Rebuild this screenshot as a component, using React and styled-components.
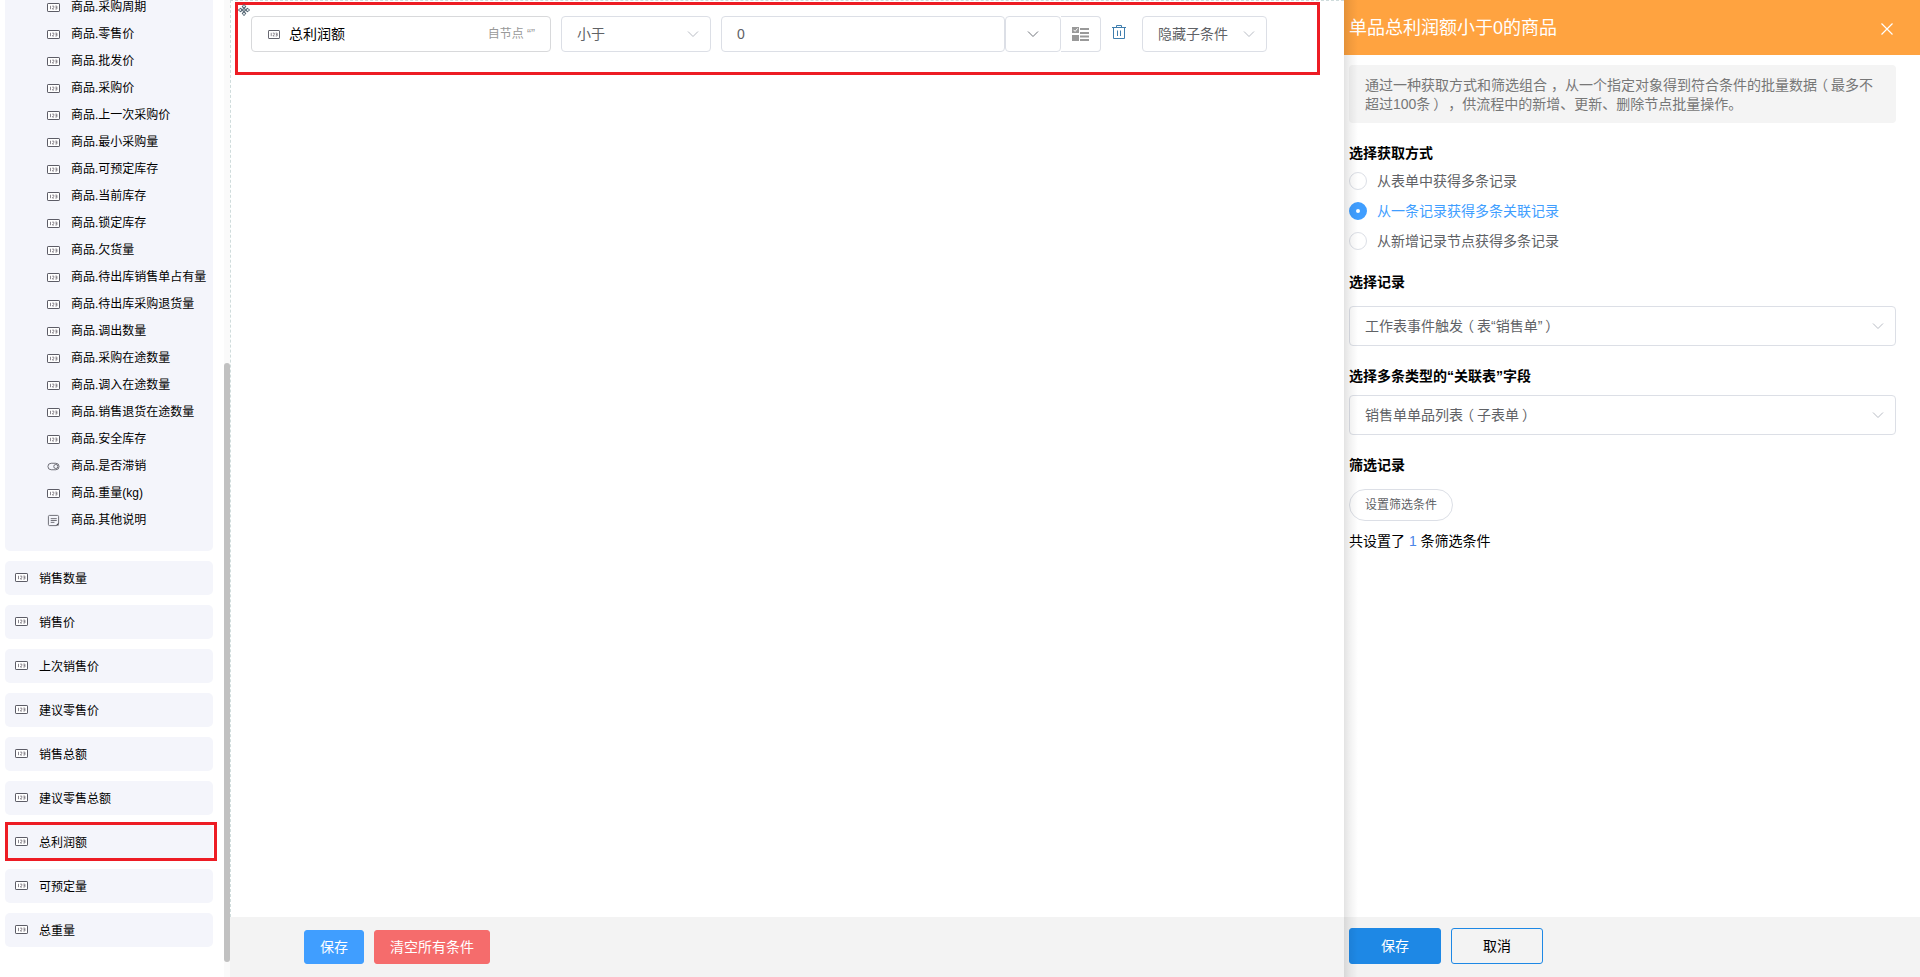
import React from "react";
import styled, { createGlobalStyle, css } from "styled-components";

const GlobalStyle = createGlobalStyle`
  *, *::before, *::after { box-sizing: border-box; }
  body {
    margin: 0;
    background: #fff;
    color: #000;
    font-family: "Liberation Sans", "Noto Sans CJK SC", sans-serif;
    font-size: 14px;
    overflow: hidden;
    text-spacing-trim: space-all;
  }
  button { font-family: inherit; }
`;

const Page = styled.div`
  display: flex;
  width: 1920px;
  height: 977px;
  overflow: hidden;
`;

/* ---------- field list ---------- */

const Sidebar = styled.aside`
  display: flex;
  width: 230px;
  height: 977px;
  flex: none;
`;

const FieldList = styled.div`
  width: 224px;
  padding-left: 5px;
`;

const FieldGroup = styled.ul`
  list-style: none;
  margin: 0;
  width: 208px;
  height: 551px;
  padding: 0 0 0 42px;
  background: #f4f5fb;
  border-radius: 0 0 5px 5px;
  overflow: hidden;

  li:first-child { margin-top: -6px; }
`;

const GroupItem = styled.li`
  display: flex;
  align-items: center;
  gap: 11px;
  height: 27px;
  font-size: 12px;
  line-height: 27px;
  white-space: nowrap;

  svg { flex: none; }
`;

const FieldCard = styled.div`
  position: relative;
  display: flex;
  align-items: center;
  gap: 11px;
  width: 208px;
  height: 34px;
  margin-top: 10px;
  padding-left: 10px;
  background: #f4f5fb;
  border-radius: 5px;
  font-size: 12px;
  line-height: 34px;

  svg { flex: none; margin-bottom: 1px; }
  span { margin-top: 2px; }

  ${(p) =>
    p.$marked &&
    css`
      &::after {
        content: "";
        position: absolute;
        top: -3px;
        left: 0;
        width: 212px;
        height: 39px;
        border: 3px solid #ed1c24;
      }
    `}
`;

const ScrollTrack = styled.div`
  width: 6px;
  height: 100%;
  padding-top: 363px;
  background: #fafafa;
`;

const ScrollThumb = styled.div`
  height: 599px;
  background: #c1c1c1;
  border-radius: 3px;
`;

/* ---------- condition canvas ---------- */

const Main = styled.main`
  display: flex;
  flex-direction: column;
  width: 1114px;
  height: 977px;
  flex: none;
`;

const Canvas = styled.section`
  position: relative;
  flex: 1;
  padding: 1px 0 0 4px;
  border-top: 1px dashed #cfdcdc;
  border-left: 1px dashed #cfdcdc;
`;

const ConditionRow = styled.div`
  display: flex;
  width: 1085px;
  height: 73px;
  padding: 11px 0 0 13px;
  border: 3px solid #ed1c24;
`;

const DragHandle = styled.svg`
  position: absolute;
  left: 7px;
  top: 3px;
`;

const ControlBox = styled.div`
  display: flex;
  align-items: center;
  width: ${(p) => p.$w}px;
  height: ${(p) => p.$h || 36}px;
  flex: none;
  margin-right: ${(p) => p.$gap || 0}px;
  padding: 0 11px 0 15px;
  border: 1px solid #dcdfe6;
  border-radius: 4px;
  background: #fff;
  color: #606266;
  line-height: 34px;
  white-space: nowrap;
`;

const FieldBox = styled(ControlBox)`
  padding-right: 15px;
  padding-left: 16px;
  border-color: #d8d9db;
  color: #000;
  gap: 9px;
`;

const IconBox = styled(ControlBox)`
  justify-content: center;
  padding: 0;
  ${(p) => p.$joined && "border-left: 0; border-radius: 0 4px 4px 0;"}
`;

const NodeHint = styled.span`
  margin-left: auto;
  color: #999;
  font-size: 12px;
`;

const ChevronIcon = styled.svg`
  margin-left: ${(p) => (p.$center ? 0 : "auto")};
  flex: none;
  fill: none;
  stroke: ${(p) => p.$color || "#b8bcc4"};
`;

const TrashButton = styled.span`
  display: flex;
  width: 41px;
  padding: 9px 0 0 11px;
`;

const FooterBar = styled.footer`
  display: flex;
  height: 60px;
  flex: none;
  background: #f3f3f3;
  padding: ${(p) => p.$pad};
  gap: 10px;
`;

const Button = styled.button`
  width: ${(p) => p.$w}px;
  height: ${(p) => p.$h || 34}px;
  padding: 0;
  border: 1px solid ${(p) => p.$border || p.$bg};
  border-radius: ${(p) => p.$radius || 3}px;
  background: ${(p) => p.$bg};
  color: ${(p) => p.$color || "#fff"};
  font-size: ${(p) => p.$size || 14}px;
  line-height: 1;
`;

/* ---------- drawer ---------- */

const Drawer = styled.aside`
  position: relative;
  display: flex;
  flex-direction: column;
  width: 576px;
  height: 977px;
  flex: none;
  background: #fff;

  &::before {
    content: "";
    position: absolute;
    inset: 0 auto 0 0;
    width: 14px;
    background: linear-gradient(to right, rgba(0, 0, 0, 0.11), rgba(0, 0, 0, 0.05) 45%, transparent);
  }
`;

const DrawerHeader = styled.header`
  display: flex;
  align-items: center;
  justify-content: space-between;
  height: 55px;
  flex: none;
  padding: 0 27px 4px 5px;
  background: #ffa340;
  color: #fff;
  font-size: 18px;

  svg { margin-top: 6px; }
`;

const DrawerBody = styled.div`
  flex: 1;
  padding: 10px 24px 0 5px;
`;

const Hint = styled.p`
  margin: 0 0 20px;
  height: 58px;
  padding: 11px 16px 9px;
  border-radius: 4px;
  background: #f4f4f4;
  color: #777;
  line-height: 19px;
  white-space: nowrap;
`;

const OpenParen = styled.span`
  margin: 0 3px 0 -3px;
`;

const CloseParen = styled.span`
  margin: 0 -3px 0 3px;
`;

const Heading = styled.h4`
  margin: ${(p) => p.$before || 0}px 0 ${(p) => p.$after}px;
  height: 20px;
  font-size: 14px;
  font-weight: 700;
  line-height: 20px;
`;

const RadioRow = styled.label`
  display: flex;
  align-items: center;
  gap: 10px;
  height: 30px;
  color: ${(p) => (p.$on ? "#409eff" : "#606266")};

  span { margin-bottom: 2px; }
`;

const RadioDot = styled.i`
  width: 18px;
  height: 18px;
  border-radius: 50%;
  border: ${(p) => (p.$on ? "7px solid #409eff" : "1px solid #dcdfe6")};
  background: #fff;
`;

const Summary = styled.p`
  margin: 10px 0 0;
  line-height: 20px;

  b { color: #4a86e8; font-weight: 400; }
`;

/* ---------- icons ---------- */

const NumberIcon = ({ w = 13 }) => (
  <svg width={w} height="9" viewBox="0 0 13 9" preserveAspectRatio="none" fill="none">
    <rect x="0.5" y="0.5" width="12" height="8" rx="0.6" fill="#fff" stroke="#5c5c66" />
    <path d="M3.5 2.800v3.400M5.200 3.100h1.600v1.300L5.300 6H7M8.300 3.100H9.900V6H8.300M8.600 4.500h1.300" stroke="#77727c" strokeWidth="0.85" />
  </svg>
);

const SwitchIcon = () => (
  <svg width="13" height="9" viewBox="0 0 14 9" fill="none" stroke="#66666e">
    <rect x="1" y="1" width="12" height="7" rx="3.5" />
    <circle cx="9.5" cy="4.5" r="2.2" />
  </svg>
);

const NoteIcon = () => (
  <svg width="13" height="13" viewBox="0 0 14 13" fill="none" stroke="#66666e">
    <path d="M10 12H2.800A1.300 1.300 0 0 1 1.500 10.700V2.300A1.300 1.300 0 0 1 2.800 1h8.400a1.300 1.300 0 0 1 1.300 1.300V9.500zM4 4.500h6.500M4 6.500h6.500M4 8.500h4" />
    <path d="M9.500 12l3-3v3z" fill="#44444c" stroke="none" />
  </svg>
);

const Chevron = ({ color, center }) => (
  <ChevronIcon width="12" height="8" viewBox="0 0 12 8" $color={color} $center={center}>
    <path d="M1 1.500l5 5 5-5" />
  </ChevronIcon>
);

const ListIcon = () => (
  <svg width="18" height="14" viewBox="0 0 18 14" fill="#999">
    <path d="M0 0h7v6H0zM0 8h7v6H0zM8 1h9v2H8zM8 5h9v2H8zM8 8.500h9v2H8zM8 12h9v2H8z" />
    <path d="M1.500 2.800l1.600 1.600 2.500-3" fill="none" stroke="#fff" />
  </svg>
);

const TrashIcon = () => (
  <svg width="14" height="15" viewBox="0 0 14 15" fill="none" stroke="#3f7eae">
    <path d="M0 2.500h14M4.500 2V.5h5V2M1.500 3v10.500h11V3M5.500 5.500v5.500M8.500 5.500v5.500" />
  </svg>
);

const CloseIcon = () => (
  <svg width="12" height="12" viewBox="0 0 12 12" stroke="#fff" strokeWidth="1.2">
    <path d="M.5.5l11 11M11.500.5L.5 11.500" />
  </svg>
);

const MoveIcon = () => (
  <DragHandle width="12" height="12" viewBox="0 0 12 12">
    <path
      d="M6 .3l2 2.700H6.600v2.400H9V4l2.700 2L9 8V6.600H6.600V9H8l-2 2.700L4 9h1.400V6.600H3V8L.3 6 3 4v1.400h2.400V3H4z"
      fill="#fff"
      stroke="#2c4254"
      strokeWidth="0.8"
    />
  </DragHandle>
);

const GROUP_FIELDS = [
  "采购周期", "零售价", "批发价", "采购价", "上一次采购价", "最小采购量", "可预定库存",
  "当前库存", "锁定库存", "欠货量", "待出库销售单占有量", "待出库采购退货量", "调出数量",
  "采购在途数量", "调入在途数量", "销售退货在途数量", "安全库存", "是否滞销", "重量(kg)", "其他说明",
];

const GROUP_ICONS = { 是否滞销: SwitchIcon, 其他说明: NoteIcon };

const CARD_FIELDS = [
  "销售数量", "销售价", "上次销售价", "建议零售价", "销售总额", "建议零售总额", "总利润额", "可预定量", "总重量",
];

export default function App() {
  return (
    <Page>
      <GlobalStyle />
      <Sidebar>
        <FieldList>
          <FieldGroup>
            {GROUP_FIELDS.map((name) => {
              const Icon = GROUP_ICONS[name] || NumberIcon;
              return (
                <GroupItem key={name}>
                  <Icon />
                  <span>商品.{name}</span>
                </GroupItem>
              );
            })}
          </FieldGroup>
          {CARD_FIELDS.map((name) => (
            <FieldCard key={name} $marked={name === "总利润额"}>
              <NumberIcon />
              <span>{name}</span>
            </FieldCard>
          ))}
        </FieldList>
        <ScrollTrack>
          <ScrollThumb />
        </ScrollTrack>
      </Sidebar>

      <Main>
        <Canvas>
          <ConditionRow>
            <FieldBox $w={300} $gap={10}>
              <NumberIcon w={12} />
              <span>总利润额</span>
              <NodeHint>自节点 “”</NodeHint>
            </FieldBox>
            <ControlBox $w={150} $gap={10}>
              小于
              <Chevron />
            </ControlBox>
            <ControlBox $w={284}>0</ControlBox>
            <IconBox $w={56}>
              <Chevron color="#70747b" center />
            </IconBox>
            <IconBox $w={40} $joined>
              <ListIcon />
            </IconBox>
            <TrashButton>
              <TrashIcon />
            </TrashButton>
            <ControlBox $w={125}>
              隐藏子条件
              <Chevron />
            </ControlBox>
          </ConditionRow>
          <MoveIcon />
        </Canvas>
        <FooterBar $pad="13px 0 0 74px">
          <Button $w={60} $bg="#409eff">保存</Button>
          <Button $w={116} $bg="#f56c6c">清空所有条件</Button>
        </FooterBar>
      </Main>

      <Drawer>
        <DrawerHeader>
          <span>单品总利润额小于0的商品</span>
          <CloseIcon />
        </DrawerHeader>
        <DrawerBody>
          <Hint>
            通过一种获取方式和筛选组合 ，从一个指定对象得到符合条件的批量数据
            <OpenParen>（</OpenParen>最多不
            <br />
            超过100条<CloseParen>）</CloseParen> ，供流程中的新增、更新、删除节点批量操作。
          </Hint>
          <Heading $after={3}>选择获取方式</Heading>
          <RadioRow>
            <RadioDot />
            <span>从表单中获得多条记录</span>
          </RadioRow>
          <RadioRow $on>
            <RadioDot $on />
            <span>从一条记录获得多条关联记录</span>
          </RadioRow>
          <RadioRow>
            <RadioDot />
            <span>从新增记录节点获得多条记录</span>
          </RadioRow>
          <Heading $before={16} $after={14}>选择记录</Heading>
          <ControlBox $w={547} $h={40}>
            <span>
              工作表事件触发<OpenParen>（</OpenParen>表“销售单”<CloseParen>）</CloseParen>
            </span>
            <Chevron />
          </ControlBox>
          <Heading $before={20} $after={9}>选择多条类型的“关联表”字段</Heading>
          <ControlBox $w={547} $h={40}>
            <span>
              销售单单品列表<OpenParen>（</OpenParen>子表单<CloseParen>）</CloseParen>
            </span>
            <Chevron />
          </ControlBox>
          <Heading $before={20} $after={14}>筛选记录</Heading>
          <Button $w={104} $h={32} $bg="#fff" $border="#dcdfe6" $color="#606266" $radius={16} $size={12}>
            设置筛选条件
          </Button>
          <Summary>
            共设置了 <b>1</b> 条筛选条件
          </Summary>
        </DrawerBody>
        <FooterBar $pad="11px 0 0 5px">
          <Button $w={92} $h={36} $bg="#1e88e5">保存</Button>
          <Button $w={92} $h={36} $bg="#f3f3f3" $border="#1e88e5" $color="#000">取消</Button>
        </FooterBar>
      </Drawer>
    </Page>
  );
}
